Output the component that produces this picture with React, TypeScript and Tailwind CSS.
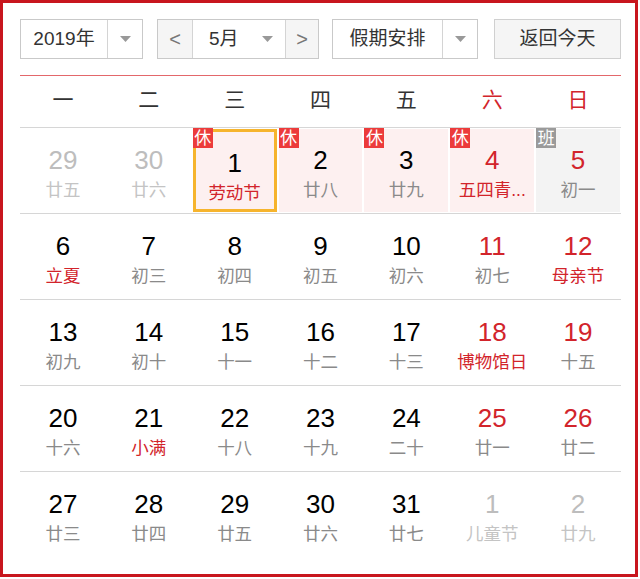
import React from 'react';

type Day = {
  n: number;
  lunar: string;
  faded?: boolean;
  weekend?: boolean;
  festival?: boolean;
  badge?: '休' | '班';
  selected?: boolean;
};

const weekdays = ['一', '二', '三', '四', '五', '六', '日'];

const weeks: Day[][] = [
  [
    { n: 29, lunar: '廿五', faded: true },
    { n: 30, lunar: '廿六', faded: true },
    { n: 1, lunar: '劳动节', festival: true, badge: '休', selected: true },
    { n: 2, lunar: '廿八', badge: '休' },
    { n: 3, lunar: '廿九', badge: '休' },
    { n: 4, lunar: '五四青...', festival: true, weekend: true, badge: '休' },
    { n: 5, lunar: '初一', weekend: true, badge: '班' },
  ],
  [
    { n: 6, lunar: '立夏', festival: true },
    { n: 7, lunar: '初三' },
    { n: 8, lunar: '初四' },
    { n: 9, lunar: '初五' },
    { n: 10, lunar: '初六' },
    { n: 11, lunar: '初七', weekend: true },
    { n: 12, lunar: '母亲节', festival: true, weekend: true },
  ],
  [
    { n: 13, lunar: '初九' },
    { n: 14, lunar: '初十' },
    { n: 15, lunar: '十一' },
    { n: 16, lunar: '十二' },
    { n: 17, lunar: '十三' },
    { n: 18, lunar: '博物馆日', festival: true, weekend: true },
    { n: 19, lunar: '十五', weekend: true },
  ],
  [
    { n: 20, lunar: '十六' },
    { n: 21, lunar: '小满', festival: true },
    { n: 22, lunar: '十八' },
    { n: 23, lunar: '十九' },
    { n: 24, lunar: '二十' },
    { n: 25, lunar: '廿一', weekend: true },
    { n: 26, lunar: '廿二', weekend: true },
  ],
  [
    { n: 27, lunar: '廿三' },
    { n: 28, lunar: '廿四' },
    { n: 29, lunar: '廿五' },
    { n: 30, lunar: '廿六' },
    { n: 31, lunar: '廿七' },
    { n: 1, lunar: '儿童节', faded: true },
    { n: 2, lunar: '廿九', faded: true },
  ],
];

const Caret = () => (
  <svg width="11" height="6" viewBox="0 0 11 6">
    <path d="M0 0h11L5.5 6z" fill="#999" />
  </svg>
);

const DayCell: React.FC<{ d: Day }> = ({ d }) => {
  const numColor = d.faded ? 'text-[#bdbdbd]' : d.weekend ? 'text-[#d2242b]' : 'text-black';
  const lunarColor = d.faded ? 'text-[#c4c4c4]' : d.festival ? 'text-[#d2242b]' : 'text-[#8a8a8a]';
  const bg = d.badge === '休' ? 'bg-[#fdf0f0]' : d.badge === '班' ? 'bg-[#f3f3f3]' : '';

  return (
    <div className="relative h-full p-px">
      <div
        className={`h-full flex flex-col items-center pt-[16px] ${bg} ${
          d.selected ? 'border-[3px] border-[#f6b42d] pt-[13px]' : ''
        }`}
      >
        <div className={`text-[26px] leading-[30px] ${numColor}`}>{d.n}</div>
        <div className={`mt-[3px] text-[17.5px] leading-[24px] whitespace-nowrap ${lunarColor}`}>{d.lunar}</div>
      </div>
      {d.badge && (
        <div
          className={`absolute top-0 left-px w-[20px] h-[20px] flex items-center justify-center text-white text-[17px] leading-none ${
            d.badge === '休' ? 'bg-[#ec3b3b]' : 'bg-[#9a9a9a]'
          }`}
        >
          {d.badge}
        </div>
      )}
    </div>
  );
};

export default function App() {
  return (
    <div
      className="w-[640px] h-[579px] bg-white text-[#333]"
      style={{ fontFamily: '"Liberation Sans", "Noto Sans CJK SC", sans-serif' }}
    >
      <div className="w-[638px] h-[577px] border-[3px] border-[#c8161e] pl-[17px] pr-[14px] pt-[16px]">
        {/* controls */}
        <div className="flex h-[40px] text-[19px]">
          <div className="w-[123px] flex border border-[#c9c9c9]">
            <div className="w-[86px] flex items-center justify-center">2019年</div>
            <div className="flex-1 flex items-center justify-center border-l border-[#d4d4d4]">
              <Caret />
            </div>
          </div>

          <div className="ml-[14px] w-[162px] flex border border-[#c9c9c9]">
            <div className="w-[34px] flex items-center justify-center bg-[#f5f5f5] text-[#777] text-[20px]">&lt;</div>
            <div className="w-[94px] flex items-center border-x border-[#d4d4d4] pl-[16px]">
              <span>5月</span>
              <span className="ml-auto mr-[12px] flex">
                <Caret />
              </span>
            </div>
            <div className="flex-1 flex items-center justify-center bg-[#f5f5f5] text-[#777] text-[20px]">&gt;</div>
          </div>

          <div className="ml-[13px] w-[146px] flex border border-[#c9c9c9]">
            <div className="w-[109px] flex items-center justify-center">假期安排</div>
            <div className="flex-1 flex items-center justify-center border-l border-[#d4d4d4]">
              <Caret />
            </div>
          </div>

          <div className="ml-[16px] flex-1 flex items-center justify-center border border-[#d0d0d0] bg-[#f5f5f5]">
            返回今天
          </div>
        </div>

        <div className="mt-[16px] h-px bg-[#e3676b]" />

        {/* weekdays */}
        <div className="grid grid-cols-7 h-[52px] border-b border-[#d6d6d6] text-[21px]">
          {weekdays.map((w, i) => (
            <div
              key={w}
              className={`flex items-center justify-center pb-[3px] ${i >= 5 ? 'text-[#d2242b]' : 'text-[#333]'}`}
            >
              {w}
            </div>
          ))}
        </div>

        {/* days */}
        {weeks.map((week, wi) => (
          <div
            key={wi}
            className={`grid grid-cols-7 h-[86px] ${wi < weeks.length - 1 ? 'border-b border-[#d6d6d6]' : ''}`}
          >
            {week.map((d, di) => (
              <DayCell key={di} d={d} />
            ))}
          </div>
        ))}
      </div>
    </div>
  );
}
